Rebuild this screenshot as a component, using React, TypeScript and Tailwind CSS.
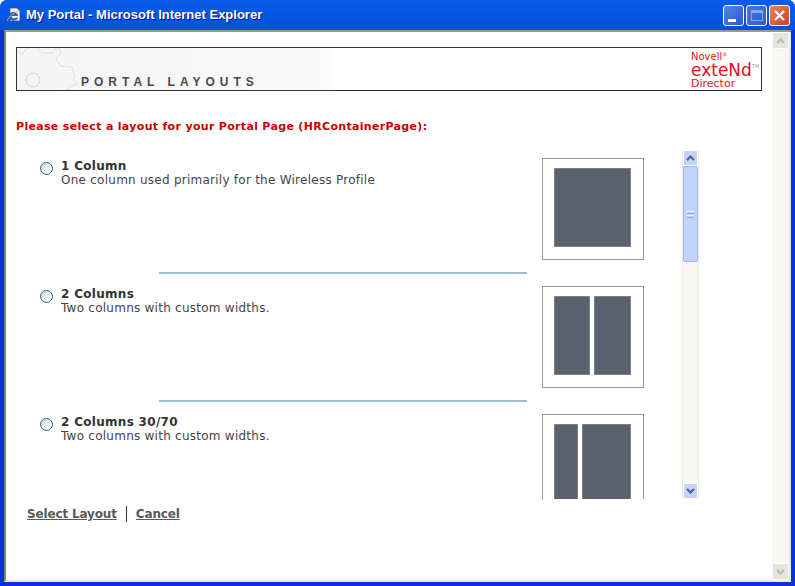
import type { ReactNode } from "react";

const FONT = "font-['DejaVu_Sans','Liberation_Sans',sans-serif]";

type Layout = { title: string; text: string; columns: string[] };

const LAYOUTS: Layout[] = [
  { title: "1 Column", text: "One column used primarily for the Wireless Profile", columns: ["w-[77px]"] },
  { title: "2 Columns", text: "Two columns with custom widths.", columns: ["w-[36px]", "w-[37px]"] },
  { title: "2 Columns 30/70", text: "Two columns with custom widths.", columns: ["w-[24px]", "w-[49px]"] },
];

function CaptionButton({ className, children }: { className: string; children: ReactNode }) {
  return (
    <div className={`flex h-[21px] w-[21px] items-center justify-center rounded-[3px] border border-white ${className}`}>
      {children}
    </div>
  );
}

function IeIcon() {
  return (
    <svg width="16" height="16" viewBox="0 0 16 16">
      <path d="M4 1h7l3 3v10H4z" fill="#f4f6fb" stroke="#44527a" strokeWidth="0.8" />
      <path d="M3 9a4.5 4 0 1 1 9 0H5.5a2.5 2.2 0 0 0 4.5 1.4h2A4.5 4 0 0 1 3 9z" fill="#1f62c9" />
      <path d="M1 14C3 9 9 5 14 3" stroke="#e0a92c" strokeWidth="1" fill="none" />
    </svg>
  );
}

function GearBackdrop() {
  return (
    <svg width="64" height="42" viewBox="0 0 64 42" className="absolute left-0 top-0">
      <path
        d="M0 3 L5 6 L11 0 M20 0 L25 5 L35 5 L40 0 M42 0 L44 5 L39 11 L44 18 L55 19 L58 28 L56 30 L60 36 L54 38 L49 42"
        fill="none"
        stroke="#dedede"
        strokeWidth="1"
      />
      <circle cx="16" cy="32" r="7" fill="none" stroke="#d6d6d6" strokeWidth="1" />
    </svg>
  );
}

function Radio() {
  return (
    <div className="mt-[4px] h-[13px] w-[13px] shrink-0 rounded-full border border-[#2f5f97] bg-gradient-to-br from-[#dcdcd7] to-white" />
  );
}

function ScrollArrow({ down, muted }: { down?: boolean; muted?: boolean }) {
  const color = muted ? "#b9bdb0" : "#4d6185";
  return (
    <svg width="9" height="6" viewBox="0 0 9 6">
      <path d={down ? "M1 1l3.5 3.5L8 1" : "M1 5L4.5 1.5 8 5"} fill="none" stroke={color} strokeWidth="2" />
    </svg>
  );
}

function LayoutRow({ item, last }: { item: Layout; last: boolean }) {
  return (
    <div className="h-[128px] shrink-0">
      <div className="flex h-[110px] pl-[24px] pt-[8px]">
        <Radio />
        <div className="ml-[8px] w-[481px] pt-[1px] text-[12px] leading-[14px]">
          <div className="font-bold tracking-[0.3px] text-[#333333]">{item.title}</div>
          <div className="tracking-[0.25px] text-[#444444]">{item.text}</div>
        </div>
        <div className="flex h-[102px] w-[102px] shrink-0 gap-[4px] border border-[#999999] bg-white px-[11px] py-[9px]">
          {item.columns.map((width, index) => (
            <div key={index} className={`h-[79px] border border-[#808080] bg-[#5a6270] ${width}`} />
          ))}
        </div>
      </div>
      {!last && <div className="ml-[143px] mt-[12px] h-[2px] w-[368px] bg-[#9dbdd0]" />}
    </div>
  );
}

export default function App() {
  return (
    <div className={`flex h-[586px] w-[795px] flex-col overflow-hidden rounded-t-[7px] bg-[#0831d9] ${FONT}`}>
      {/* Заголовок окна */}
      <div className="flex h-[30px] shrink-0 items-center bg-gradient-to-b from-[#0a5be8] via-[#0058e6] to-[#0a4fd0] pl-[6px] pr-[5px]">
        <IeIcon />
        <div className="ml-[4px] font-['Liberation_Sans',sans-serif] text-[13px] font-bold text-white [text-shadow:1px_1px_#0f1089]">
          My Portal - Microsoft Internet Explorer
        </div>
        <div className="ml-auto flex gap-[2px]">
          <CaptionButton className="bg-gradient-to-br from-[#5a84e8] to-[#2a55d0]">
            <div className="mt-[10px] mr-[4px] h-[3px] w-[8px] bg-white" />
          </CaptionButton>
          <CaptionButton className="border-[#7f9fe8] bg-gradient-to-br from-[#4a74dc] to-[#2f5cd4]">
            <div className="h-[11px] w-[12px] border border-t-[3px] border-[#86a6ec]" />
          </CaptionButton>
          <CaptionButton className="bg-gradient-to-br from-[#e8825f] to-[#c8401f]">
            <svg width="13" height="13" viewBox="0 0 13 13">
              <path d="M2 2l9 9M11 2l-9 9" stroke="white" strokeWidth="2.2" />
            </svg>
          </CaptionButton>
        </div>
      </div>

      {/* Клиентская область */}
      <div className="flex min-h-0 flex-1 px-[4px] pb-[4px]">
        <div className="flex min-w-0 flex-1 border-l-2 border-t-2 border-b-2 border-l-[#808078] border-t-[#9a9a90] border-b-[#ece9d8] bg-white">
          <div className="min-w-0 flex-1 pl-[10px] pt-[15px]">
            {/* Шапка портала */}
            <div className="flex h-[44px] w-[746px] border border-[#333333] bg-white">
              <div className="relative h-full w-[313px] overflow-hidden bg-gradient-to-r from-[#f5f5f5] via-[#f7f7f7] to-[#fbfbfb]">
                <GearBackdrop />
                <div className="absolute left-[64px] top-[26px] whitespace-nowrap font-['Liberation_Sans',sans-serif] text-[12px] font-bold leading-[16px] tracking-[5px] text-[#4a4a4a]">
                  PORTAL LAYOUTS
                </div>
              </div>
              <div className="ml-auto mr-[4px] flex w-[66px] flex-col pt-[3px] text-[#e0101c]">
                <div className="whitespace-nowrap text-[10px] leading-[11px]">
                  Novell<span className="align-top text-[5px] leading-[6px]">®</span>
                </div>
                <div className="whitespace-nowrap text-[17px] leading-[16px]">
                  exteNd<span className="align-top text-[5px] leading-[8px] text-[#999999]">TM</span>
                </div>
                <div className="whitespace-nowrap text-[11px] leading-[12px]">Director</div>
              </div>
            </div>

            <div className="mt-[29px] text-[11px] font-bold leading-[14px] tracking-[0.32px] text-[#cc0000]">
              Please select a layout for your Portal Page (HRContainerPage):
            </div>

            <div className="mt-[16px] flex h-[349px] w-[683px]">
              <div className="flex min-w-0 flex-1 flex-col overflow-hidden">
                {LAYOUTS.map((item, index) => (
                  <LayoutRow key={item.title} item={item} last={index === LAYOUTS.length - 1} />
                ))}
              </div>
              {/* Внутренняя полоса прокрутки */}
              <div className="flex w-[17px] shrink-0 flex-col border-x border-[#efece0] bg-[#f8f7f2]">
                <div className="flex h-[16px] items-center justify-center rounded-[2px] border border-white bg-[#c3d4fc]">
                  <ScrollArrow />
                </div>
                <div className="flex h-[96px] flex-col items-center justify-center gap-[1px] rounded-[2px] border border-[#9fb6e8] bg-[#c3d4fc]">
                  <div className="h-px w-[7px] bg-[#eef3ff]" />
                  <div className="h-px w-[7px] bg-[#8fa8dc]" />
                  <div className="h-px w-[7px] bg-[#eef3ff]" />
                  <div className="h-px w-[7px] bg-[#8fa8dc]" />
                </div>
                <div className="flex-1" />
                <div className="flex h-[16px] items-center justify-center rounded-[2px] border border-white bg-[#c3d4fc]">
                  <ScrollArrow down />
                </div>
              </div>
            </div>

            <div className="ml-[11px] mt-[7px] flex items-center text-[12px] font-bold leading-[16px] tracking-[-0.15px] text-[#555a5a] underline">
              <span>Select Layout</span>
              <span className="mx-[9px] h-[16px] w-px bg-[#333333]" />
              <span>Cancel</span>
            </div>
          </div>

          {/* Полоса прокрутки окна */}
          <div className="flex w-[19px] shrink-0 flex-col justify-between border-r-2 border-[#ece9d8] bg-[#f8f7f2]">
            <div className="flex h-[17px] items-center justify-center rounded-[2px] border border-white bg-[#e6e5da]">
              <ScrollArrow muted />
            </div>
            <div className="flex h-[17px] items-center justify-center rounded-[2px] border border-white bg-[#e6e5da]">
              <ScrollArrow down muted />
            </div>
          </div>
        </div>
      </div>
    </div>
  );
}
